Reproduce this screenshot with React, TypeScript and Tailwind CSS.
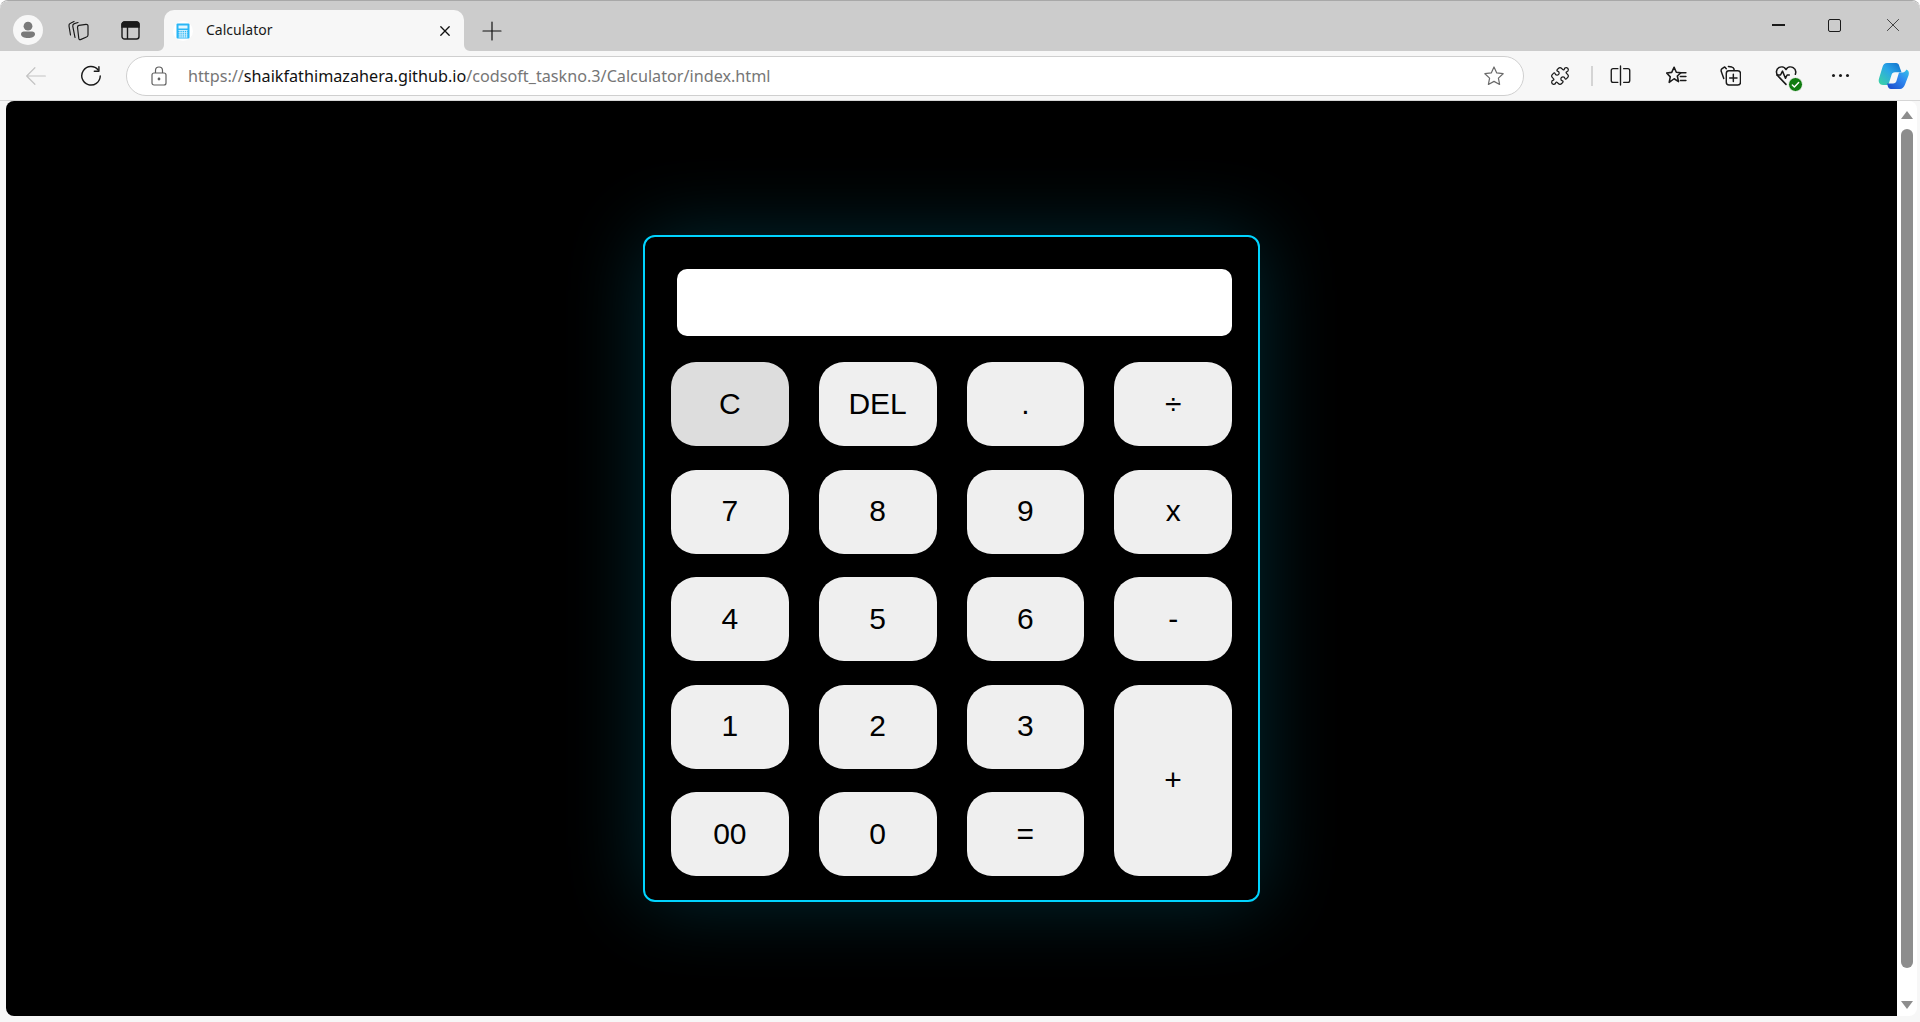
import React from 'react'
import { Puzzle } from 'lucide-react'

const keys = [
    { label: "C", bg: "bg-[#dddddd]" },
    { label: "DEL" },
    { label: "." },
    { label: "÷" },
    { label: "7" },
    { label: "8" },
    { label: "9" },
    { label: "x" },
    { label: "4" },
    { label: "5" },
    { label: "6" },
    { label: "-" },
    { label: "1" },
    { label: "2" },
    { label: "3" },
    { label: "+", tall: true },
    { label: "00" },
    { label: "0" },
    { label: "=" },
]

const Stroke = ({ size = 20, children, color = "#1a1a1a", width = 1.3 }: { size?: number; children: React.ReactNode; color?: string; width?: number }) => (
    <svg width={size} height={size} viewBox="0 0 20 20" fill="none" stroke={color} strokeWidth={width} strokeLinecap="round" strokeLinejoin="round">
        {children}
    </svg>
)

const TabStrip = () => (
    <div className="flex h-[50px] items-start bg-[#cccccc] rounded-t-lg">
        <div className="ml-[13px] mt-[14px] flex h-[30px] w-[30px] items-center justify-center rounded-full bg-[#f7f7f7]">
            <svg width="20" height="20" viewBox="0 0 20 20" fill="#7a7a7a">
                <circle cx="10" cy="6.2" r="4.4" />
                <path d="M3 14c0-1.6 1.3-2.6 2.8-2.6h8.4c1.5 0 2.8 1 2.8 2.6 0 2.6-3 4-7 4s-7-1.400-7-4z" />
            </svg>
        </div>
        <div className="ml-[25px] mt-[19px]">
            <svg width="21" height="21" viewBox="0 0 21 21" fill="none" stroke="#1a1a1a" strokeWidth="1.2" strokeLinejoin="round" strokeLinecap="round">
                <path d="M2.500 15 1 6C.8 4.800 1.300 3.800 2.500 3.300L6 1.500" />
                <path d="M7 17.500 4.800 6.300C4.600 5 5.200 4 6.300 3.600L10 2.500" />
                <path d="M9.500 7.200Q9.500 5.600 11 5.300L18 4.400Q20 4.300 20 6V15Q20 16.500 18.500 17L12.500 19.600Q11 20 10.800 18.500Z" />
            </svg>
        </div>
        <div className="ml-[32px] mt-[20px]">
            <svg width="19" height="19" viewBox="0 0 19 19" fill="none" stroke="#1a1a1a" strokeWidth="1.4">
                <rect x="1" y="1" width="17" height="17" rx="2.5" />
                <path d="M1 3.5a2.5 2.5 0 0 1 2.5-2.5h12A2.5 2.5 0 0 1 18 3.5V6H1z" fill="#1a1a1a" />
                <path d="M6.5 6v12" />
            </svg>
        </div>
        <div className="relative ml-[24px] mt-[9px] flex h-[41px] w-[300px] items-center rounded-t-[10px] bg-[#f7f7f7] pl-[9px]">
            <svg className="absolute -left-[6px] bottom-0" width="6" height="6" viewBox="0 0 6 6"><path d="M6 0v6H0a6 6 0 0 0 6-6z" fill="#f7f7f7" /></svg>
            <svg className="absolute -right-[6px] bottom-0" width="6" height="6" viewBox="0 0 6 6"><path d="M0 0v6h6a6 6 0 0 1-6-6z" fill="#f7f7f7" /></svg>
            <div className="flex h-[20px] w-[20px] items-center justify-center rounded-full bg-white">
                <svg width="14" height="16" viewBox="0 0 14 16">
                    <rect x="0.5" y="0.5" width="13" height="15" rx="1" fill="#29b6f6" />
                    <rect x="2.5" y="2.5" width="9" height="3" fill="#e3f6fe" />
                    <path d="M2.5 7.5h9M2.5 9.7h9M2.5 11.9h9M2.5 14h9M4 7v7.5M6.2 7v7.5M8.4 7v7.5M10.6 7v7.5" stroke="#d5f1fd" strokeWidth="0.9" />
                </svg>
            </div>
            <span className="mb-[2px] ml-[13px] font-['Noto_Sans',sans-serif] text-[14px] text-[#1a1a1a]">Calculator</span>
            <div className="ml-auto mr-[13px]">
                <Stroke size={12} width={2.2} color="#111111"><path d="M3 3l14 14M17 3 3 17" /></Stroke>
            </div>
        </div>
        <div className="ml-[18px] mt-[20px]">
            <Stroke size={20} width={1.2} color="#111111"><path d="M10 1v18M1 10h18" /></Stroke>
        </div>
        <div className="ml-auto mt-[17px] flex items-center">
            <div className="mr-[43px] h-[1.5px] w-[13px] bg-[#1a1a1a]" />
            <div className="mr-[45px] h-[13px] w-[13px] rounded-[2px] border border-[#1a1a1a]" />
            <div className="mr-[20px]">
                <Stroke size={14} width={1.1} color="#1a1a1a"><path d="M2 2l16 16M18 2 2 18" /></Stroke>
            </div>
        </div>
    </div>
)

const Toolbar = () => (
    <div className="flex h-[50px] items-center bg-[#f7f7f7] border-b border-[#d6d6d6]">
        <div className="ml-[25px]">
            <Stroke size={22} width={1.1} color="#c4c4c4"><path d="M1.5 10h17M9 2.5 1.5 10 9 17.5" /></Stroke>
        </div>
        <div className="ml-[33px]">
            <Stroke size={22} width={1.3} color="#1a1a1a">
                <path d="M16.5 4.5A8.4 8.4 0 1 0 18.4 10" />
                <path d="M17.2 1.5v4.2H13" />
            </Stroke>
        </div>
        <div className="ml-[24px] flex h-[40px] w-[1398px] items-center rounded-full border border-[#cfcfcf] bg-white">
            <div className="ml-[24px]">
                <svg width="16" height="20" viewBox="0 0 16 20" fill="none" stroke="#5f5f5f" strokeWidth="1.2">
                    <rect x="1" y="7" width="14" height="12" rx="2" />
                    <path d="M4.5 7V4.5a3.5 3.5 0 0 1 7 0V7" />
                    <circle cx="8" cy="13" r="0.8" fill="#5f5f5f" />
                </svg>
            </div>
            <div className="ml-[21px] mt-[1px] font-['Noto_Sans',sans-serif] text-[16.2px] text-[#767676]">
                https://<span className="text-[#111111]">shaikfathimazahera.github.io</span>/codsoft_taskno.3/Calculator/index.html
            </div>
            <div className="ml-auto mr-[18px]">
                <Stroke size={22} width={1.1} color="#6b6b6b">
                    <path d="M10 1.8l2.5 5.4 5.8.7-4.3 4 1.1 5.8L10 14.9l-5.1 2.8L6 11.9l-4.3-4 5.8-.7z" />
                </Stroke>
            </div>
        </div>
        <div className="ml-[26px]">
            <Puzzle size={20} strokeWidth={1.5} color="#1a1a1a" />
        </div>
        <div className="ml-[21px] h-[20px] w-[2px] bg-[#d4d4d4]" />
        <div className="ml-[17px]">
            <Stroke size={21} width={1.3}>
                <path d="M7.5 3.5H3a1.8 1.8 0 0 0-1.8 1.8v9.4A1.8 1.8 0 0 0 3 16.5h4.5" />
                <path d="M13 3.5h4a1.8 1.8 0 0 1 1.8 1.8v9.4a1.8 1.8 0 0 1-1.8 1.8h-4" />
                <path d="M10 1v18" />
            </Stroke>
        </div>
        <div className="ml-[34px]">
            <Stroke size={22} width={1.4}>
                <path d="M8.3 2l2 4.6 4.2.4-3.3 3 1.1 5.2-4-2.7L3.800 15.800l1-5L1.500 7.300l4.600-.6z" />
                <path d="M13 7h6M14 10.500h5M14 14h5" />
            </Stroke>
        </div>
        <div className="ml-[33px]">
            <Stroke size={21} width={1.4}>
                <path d="M6 3.500 4.500 1.800 2 3.500C1 4.200.9 5.200 1.200 6.300l2.400 6.500" />
                <path d="M8 1.500l3.300.5c1 .2 1.700.8 1.900 1.500l.3 1.500" />
                <rect x="6" y="5.500" width="13.500" height="13.500" rx="2.500" />
                <path d="M12.700 8.800v7M9.200 12.300h7" />
            </Stroke>
        </div>
        <div className="relative ml-[34px] h-[24px] w-[24px]">
            <Stroke size={22} width={1.4}>
                <path d="M10 18.500 2.800 11C.5 8.500 1 4.800 3.500 3.300 5.800 2 8.600 2.700 10 5c1.400-2.300 4.200-3 6.500-1.700 2 1.200 2.800 3.700 2 6" />
                <path d="M1.500 10H5l1.800-3.500L9.500 13l1.500-3h2" />
            </Stroke>
            <div className="absolute bottom-[-4px] right-[-4px] flex h-[15px] w-[15px] items-center justify-center rounded-full border border-[#f7f7f7] bg-[#107c10]">
                <Stroke size={9} width={3.200} color="#ffffff"><path d="M3 11l4.500 4.500L17 5.500" /></Stroke>
            </div>
        </div>
        <div className="ml-[33px] flex gap-[4px]">
            <div className="h-[3px] w-[3px] rounded-full bg-[#1a1a1a]" />
            <div className="h-[3px] w-[3px] rounded-full bg-[#1a1a1a]" />
            <div className="h-[3px] w-[3px] rounded-full bg-[#1a1a1a]" />
        </div>
        <div className="ml-[29px]">
            <svg width="31" height="28" viewBox="0 0 31 28">
                <defs>
                    <linearGradient id="copA" x1="0" y1="1" x2="1" y2="0">
                        <stop offset="0" stopColor="#3dd6a0" />
                        <stop offset="0.55" stopColor="#2aa6e8" />
                        <stop offset="1" stopColor="#0f6cc9" />
                    </linearGradient>
                    <linearGradient id="copB" x1="0" y1="1" x2="1" y2="0">
                        <stop offset="0" stopColor="#1b45c8" />
                        <stop offset="0.6" stopColor="#2f8bf0" />
                        <stop offset="1" stopColor="#35c6e8" />
                    </linearGradient>
                </defs>
                <path d="M9 1h9c1.800 0 2.600 1 3 2.200l2.500 7H17c-2 0-3 1-3.500 2.800L11 21c-.5 1.600-1.500 2-3 2H5c-3.500 0-5-3-4-6.500L4.500 5C5.300 2.300 6.800 1 9 1z" fill="url(#copA)" />
                <path d="M22 27h-9c-1.800 0-2.600-1-3-2.200l-1-3.300h6c2 0 3-1 3.500-2.800L21 10.500h3.500c2 0 3.200-2 4-3 2.400 1 2.800 3.500 2 6l-3.500 9c-.8 2.700-3 4.500-5 4.500z" fill="url(#copB)" />
            </svg>
        </div>
    </div>
)

const Calculator = () => (
    <div className="w-[617px] self-start rounded-[12px] border-2 border-[#00d4ff] bg-black px-[26px] pb-[24px] pt-[32px] shadow-[0_0_80px_rgba(0,212,255,0.2)]">
        <div className="ml-[6px] h-[67px] rounded-[10px] bg-white" />
        <div className="mt-[26px] grid grid-cols-4 grid-rows-5 gap-x-[30px] gap-y-[23.5px]">
            {keys.map((key) => (
                <button
                    key={key.label}
                    className={`${key.tall ? "row-span-2" : "h-[84px]"} ${key.bg ?? "bg-[#efefef]"} rounded-[25px] pb-[2px] font-['Liberation_Sans',Arial,sans-serif] text-[30px] text-black`}
                >
                    {key.label}
                </button>
            ))}
        </div>
    </div>
)

const Scrollbar = () => (
    <div className="flex w-[20px] flex-col items-center rounded-r-lg bg-white pt-[10px]">
        <div className="h-0 w-0 border-x-[6.500px] border-b-[8px] border-x-transparent border-b-[#8d8d8d]" />
        <div className="mt-[10px] h-[839px] w-[12px] rounded-full bg-[#8d8d8d]" />
        <div className="mt-auto mb-[7px] h-0 w-0 border-x-[6.500px] border-t-[8px] border-x-transparent border-t-[#8d8d8d]" />
    </div>
)

export default function App() {
    return (
        <div className="flex h-[1022px] w-[1920px] flex-col overflow-hidden rounded-t-lg border-t border-[#a8a8a8] bg-[#f7f7f7]">
            <TabStrip />
            <Toolbar />
            <div className="ml-[6px] mr-[3px] mb-[6px] flex min-h-0 flex-1">
                <div className="flex flex-1 justify-center overflow-hidden rounded-tl-lg rounded-bl-lg bg-black pt-[134px]">
                    <Calculator />
                </div>
                <Scrollbar />
            </div>
        </div>
    )
}
